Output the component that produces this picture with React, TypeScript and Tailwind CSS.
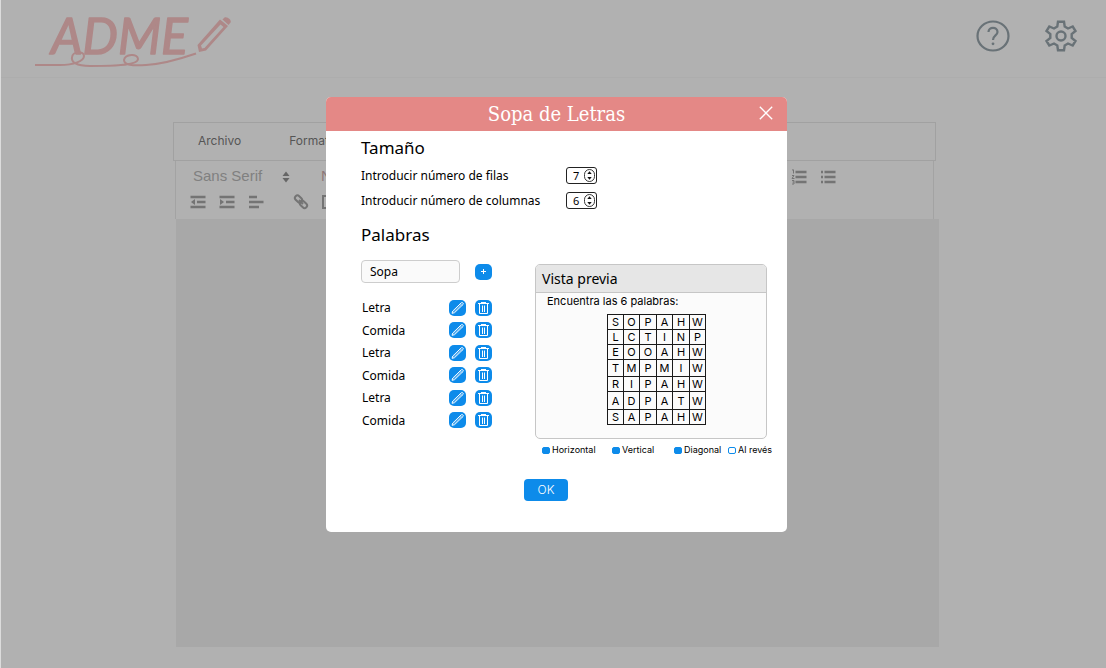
import React from "react";

const words = ["Letra", "Comida", "Letra", "Comida", "Letra", "Comida"];

const columns = ["w-[16px]", "w-[16px]", "w-[17px]", "w-[16px]", "w-[17px]", "w-[16px]"];

const rows = [
  { height: "h-[15px]", letters: "SOPAHW" },
  { height: "h-[15px]", letters: "LCTINP" },
  { height: "h-[15px]", letters: "EOOAHW" },
  { height: "h-[17px]", letters: "TMPMIW" },
  { height: "h-[15px]", letters: "RIPAHW" },
  { height: "h-[18px]", letters: "ADPATW" },
  { height: "h-[15px]", letters: "SAPAHW" },
];

const directions = [
  { label: "Horizontal", checked: true },
  { label: "Vertical", checked: true },
  { label: "Diagonal", checked: true },
  { label: "Al revés", checked: false },
];

function Logo() {
  return (
    <svg width="200" height="76" viewBox="34 0 200 76" fill="none" role="img" aria-label="ADME">
      <text
        x="51"
        y="54"
        fontSize="50"
        fontStyle="italic"
        className="font-['Lato',sans-serif]"
        fill="#ae8888"
        stroke="#ae8888"
        strokeWidth="1.500"
        strokeLinejoin="round"
      >
        ADME
      </text>
      <path
        d="M35 65H60C74 65 84 61 84 56C84 51 73 51 72 57C71 62 76 66 90 66C108 66 138 66 138 59C138 53 125 54 124 60C124 65 132 66 146 65C164 64 180 59 196 53.5"
        stroke="#ae8888"
        strokeWidth="2"
      />
      <path
        fillRule="evenodd"
        d="M197.500 45L220 19.500L228 26L206 50.500L199 52Z M201 45.500L202 48.500L204.500 48L223.500 27L220.500 24.500Z"
        fill="#ae8888"
      />
      <path d="M222.500 19.500L224.500 17.500C227 16 232 20 230.500 22.500L228.500 25Z" fill="#ae8888" />
    </svg>
  );
}

function HelpIcon() {
  return (
    <svg width="34" height="32" viewBox="0 0 34 32" fill="none" stroke="#697277" strokeWidth="2.200">
      <ellipse cx="17" cy="16" rx="15.500" ry="14.500" />
      <path d="M12.500 12C12.500 6.500 21.500 6.500 21.500 12C21.500 15.500 17 15.500 17 20" />
      <circle cx="17" cy="23.800" r="1.400" fill="#697277" stroke="none" />
    </svg>
  );
}

function GearIcon() {
  return (
    <svg width="34" height="32" viewBox="0 0 34 32" fill="none" stroke="#697277" strokeWidth="2.400" strokeLinejoin="miter">
      <path d="M14 1.700H20L20.700 6.500L24 8.500L28.700 6.500L31.500 11L27.700 14V18L31.500 21L28.700 25.500L24 23.500L20.700 25.500L20 30.300H14L13.300 25.500L10 23.500L5.300 25.500L2.500 21L6.300 18V14L2.500 11L5.300 6.500L10 8.500L13.300 6.500Z" />
      <circle cx="17" cy="16" r="4.500" />
    </svg>
  );
}

function LineIcon({ kind }: { kind: "outdent" | "indent" | "align" | "ordered" | "bullet" }) {
  const list = kind === "ordered" || kind === "bullet";
  return (
    <svg width="16" height="16" viewBox="0 0 16 16" fill="none" stroke="#747474" strokeWidth="2.400">
      {kind === "align" && <path d="M1 3H9M1 8H15.500M1 13H11" />}
      {(kind === "outdent" || kind === "indent") && <path d="M0.500 3H15.500M7 8H15.500M0.500 13H15.500" />}
      {kind === "outdent" && <path d="M5 5V11L1 8Z" fill="#747474" stroke="none" />}
      {kind === "indent" && <path d="M1 5V11L5 8Z" fill="#747474" stroke="none" />}
      {list && <path d="M4.500 3H15.500M4.500 8H15.500M4.500 13H15.500" />}
      {kind === "bullet" && <path d="M1 3H3M1 8H3M1 13H3" />}
      {kind === "ordered" && <path d="M1 1L2.500 0.800V4.500M1 6.500H3L1 9.500H3.500M1 11.500H3V15H1M1.500 13H3" strokeWidth="1" />}
    </svg>
  );
}

function LinkIcon() {
  return (
    <svg width="16" height="16" viewBox="0 0 16 16" fill="none" stroke="#747474" strokeWidth="2">
      <rect x="1.500" y="2.500" width="8" height="5" rx="2.500" transform="rotate(45 5.500 5)" />
      <rect x="6.500" y="8" width="8" height="5" rx="2.500" transform="rotate(45 10.500 10.500)" />
      <path d="M6 6L10 10" />
    </svg>
  );
}

function PencilIcon() {
  return (
    <svg width="17" height="16" viewBox="0 0 17 16" fill="none" stroke="#fff" strokeWidth="1" strokeLinejoin="round">
      <path d="M3 13.300L3.800 11L12.300 2.800C13.300 1.900 15 3.500 14 4.500L5.500 12.700Z" />
      <path d="M4.500 12L12.300 4.500M11.300 3.800L13 5.500" strokeWidth="0.600" />
    </svg>
  );
}

function TrashIcon() {
  return (
    <svg width="17" height="16" viewBox="0 0 17 16" fill="none" stroke="#fff" strokeWidth="1">
      <path d="M3 3.500H14M6 2.500H11M4.500 3.500V13.500H12.500V3.500" />
      <path d="M7.500 5.500V12M9.500 5.500V12" />
    </svg>
  );
}

function NumberField({ id, label, value }: { id: string; label: string; value: number }) {
  return (
    <div className="flex h-[25px] items-center">
      <label htmlFor={id} className="w-[205px] text-[12px]">
        {label}
      </label>
      <div className="flex h-[17px] w-[31px] items-center rounded-[3px] border border-[#222] bg-white">
        <input
          id={id}
          type="number"
          defaultValue={value}
          className="w-[17px] appearance-none bg-transparent pl-[6px] text-[11px] leading-[15px] outline-none [-moz-appearance:textfield] [&::-webkit-inner-spin-button]:appearance-none"
        />
        <svg width="11" height="13" viewBox="0 0 11 13">
          <rect x="0.500" y="0.500" width="10" height="12" rx="5" fill="#fff" stroke="#222" strokeWidth="0.900" />
          <path d="M3.300 5L5.500 2.200L7.700 5ZM3.300 8L5.500 10.800L7.700 8Z" fill="#111" />
        </svg>
      </div>
    </div>
  );
}

function Editor() {
  return (
    <main className="mt-[44px] mr-[167px] ml-[172px]">
      <nav className="mr-[3px] flex h-[39px] items-center gap-[48px] border border-[#a1a1a1] pb-[2px] pl-6 font-['Inter',sans-serif] text-[12px] text-[#555]">
        <button type="button">Archivo</button>
        <button type="button">Formato</button>
      </nav>
      <div className="mr-[5px] ml-[2px] h-[58px] border-x border-[#a3a3a3] px-[14px] pt-[3px]">
        <div className="flex h-[25px] items-center font-['Liberation_Sans',sans-serif] text-[15px] text-[#808080]">
          <button type="button" className="flex w-[131px] items-center gap-5 pl-[3px]">
            Sans Serif
            <svg width="8" height="12" viewBox="0 0 8 12">
              <path d="M0.500 5L4 0.500L7.500 5ZM0.500 7L4 11.500L7.500 7Z" fill="#666" />
            </svg>
          </button>
          <button type="button" className="text-[#8d7878]">
            Normal
          </button>
          <div className="ml-auto flex gap-[13px] pr-[83px]">
            <button type="button" aria-label="Lista numerada"><LineIcon kind="ordered" /></button>
            <button type="button" aria-label="Lista"><LineIcon kind="bullet" /></button>
          </div>
        </div>
        <div className="flex h-[26px] items-center gap-[13px]">
          <button type="button" aria-label="Reducir sangría"><LineIcon kind="outdent" /></button>
          <button type="button" aria-label="Aumentar sangría"><LineIcon kind="indent" /></button>
          <button type="button" aria-label="Alinear"><LineIcon kind="align" /></button>
          <button type="button" aria-label="Enlace" className="ml-4"><LinkIcon /></button>
          <button type="button" aria-label="Imagen">
            <svg width="16" height="14" viewBox="0 0 16 14" fill="none" stroke="#747474" strokeWidth="2">
              <rect x="1" y="1" width="14" height="12" />
            </svg>
          </button>
        </div>
      </div>
      <div className="ml-[3px] h-[428px] bg-[#a8a8a8]" />
    </main>
  );
}

function Preview() {
  return (
    <section className="mr-[6px] h-[175px] overflow-hidden rounded-[5px] border border-[#c6c6c6] bg-[#fbfbfb]">
      <h3 className="h-[28px] border-b border-[#c6c6c6] bg-[#e6e6e6] pl-[6px] text-[14px] leading-[28px]">Vista previa</h3>
      <p className="pl-[11px] font-['Inter',sans-serif] text-[11px] leading-4">Encuentra las 6 palabras:</p>
      <table className="mt-[5px] ml-[71px] table-fixed border-collapse font-['Inter',sans-serif] text-[11px] leading-[12px]">
        <tbody>
          {rows.map((row, r) => (
            <tr key={r} className={row.height}>
              {row.letters.split("").map((letter, c) => (
                <td key={c} className={`${columns[c]} border border-[#1a1a1a] p-0 text-center`}>
                  {letter}
                </td>
              ))}
            </tr>
          ))}
        </tbody>
      </table>
    </section>
  );
}

function Dialog() {
  return (
    <div role="dialog" aria-labelledby="title" className="w-[461px] overflow-hidden rounded-[5px] bg-white text-black">
      <header className="grid h-[34px] grid-cols-[1fr_auto_1fr] items-center bg-[#e48886] px-[14px] text-white">
        <h1 id="title" className="col-start-2 font-['Roboto_Slab','DejaVu_Serif_Condensed','DejaVu_Serif',serif] text-[20px] leading-[34px]">
          Sopa de Letras
        </h1>
        <button type="button" aria-label="Cerrar" className="justify-self-end pb-[3px]">
          <svg width="14" height="14" viewBox="0 0 14 14" stroke="#fff" strokeWidth="1.300">
            <path d="M0.800 0.800L13.200 13.200M13.200 0.800L0.800 13.200" />
          </svg>
        </button>
      </header>
      <div className="pt-[5px] pr-[14px] pb-[31px] pl-[35px] font-['Noto_Sans',sans-serif]">
        <h2 className="mb-[3px] text-[17px] leading-6">Tamaño</h2>
        <NumberField id="rows" label="Introducir número de filas" value={7} />
        <NumberField id="cols" label="Introducir número de columnas" value={6} />
        <h2 className="mt-[10px] text-[17px] leading-6">Palabras</h2>
        <div className="mt-[13px] flex gap-[43px]">
          <div className="w-[131px]">
            <div className="flex items-center justify-between">
              <input
                aria-label="Palabra"
                defaultValue="Sopa"
                className="h-[23px] w-[99px] rounded-[4px] border border-[#cdcdcd] bg-[#fafafa] pl-2 text-[12px]"
              />
              <button
                type="button"
                aria-label="Añadir"
                className="flex h-4 w-[17px] items-center justify-center rounded-[5px] bg-[#0d8bea]"
              >
                <svg width="5" height="5" viewBox="0 0 5 5" stroke="#fff" strokeWidth="1">
                  <path d="M2.500 0V5M0 2.500H5" />
                </svg>
              </button>
            </div>
            <ul className="mt-4 flex h-[130px] flex-col justify-between">
              {words.map((word, i) => (
                <li key={i} className="flex h-[17px] items-center gap-[9px] pl-px text-[12px] leading-[17px]">
                  <span className="flex-1">{word}</span>
                  <button type="button" aria-label="Editar" className="rounded-[5px] bg-[#0d8bea]">
                    <PencilIcon />
                  </button>
                  <button type="button" aria-label="Borrar" className="rounded-[5px] bg-[#0d8bea]">
                    <TrashIcon />
                  </button>
                </li>
              ))}
            </ul>
          </div>
          <div className="flex-1 pt-1">
            <Preview />
            <div className="mt-[5px] grid grid-cols-[70px_62px_54px_auto] pl-[7px] font-['Inter',sans-serif] text-[9px] leading-3 whitespace-nowrap">
              {directions.map((d) => (
                <label key={d.label} className="flex items-center gap-[2px]">
                  <input
                    type="checkbox"
                    defaultChecked={d.checked}
                    className="h-[7px] w-2 appearance-none rounded-[2px] border border-[#0d8bea] checked:bg-[#0d8bea]"
                  />
                  {d.label}
                </label>
              ))}
            </div>
          </div>
        </div>
        <div className="mt-[23px] flex justify-center pr-[42px]">
          <button type="button" className="h-[22px] w-[44px] rounded-[4px] bg-[#0d8bea] font-['Inter',sans-serif] text-[12px] font-light text-white">
            OK
          </button>
        </div>
      </div>
    </div>
  );
}

export default function App() {
  return (
    <div className="min-h-screen border-l border-[#dcdcdc] bg-[#b1b1b1]">
      <header className="flex h-[78px] items-start justify-between border-b border-[#adadad] pr-7 pl-[33px]">
        <a href="#">
          <Logo />
        </a>
        <div className="mt-[20px] flex gap-[34px]">
          <button type="button" aria-label="Ayuda"><HelpIcon /></button>
          <button type="button" aria-label="Ajustes"><GearIcon /></button>
        </div>
      </header>
      <Editor />
      <div className="fixed inset-0 flex items-start justify-center pt-[97px] pl-[7px]">
        <Dialog />
      </div>
    </div>
  );
}
